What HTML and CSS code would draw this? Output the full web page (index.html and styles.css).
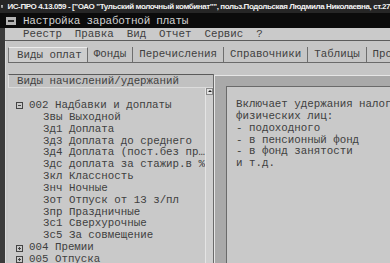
FILE: index.html
```html
<!DOCTYPE html>
<html lang="ru">
<head>
  <meta charset="UTF-8" />
  <title>ИС-ПРО | Настройка заработной платы</title>
  <link rel="stylesheet" href="styles.css">
</head>
<body>
  <div class="app">
    <div class="titlebar">
      <svg class="app-icon" width="8" height="9" viewBox="0 0 8 9">
        <rect x="0.5" y="0.5" width="7" height="8" fill="#9a9a9a" stroke="#e8e8e8" />
        <rect x="2" y="2" width="4" height="2" fill="#ffffff" />
        <rect x="2" y="5" width="4" height="2" fill="#5a5a5a" />
      </svg>
      <span class="app-title">ИС-ПРО 4.13.059 - ["ОАО "Тульский молочный комбинат"", польз.Подольская Людмила Николаевна, ст.27</span>
    </div>

    <div class="window">
      <div class="doc-title">
        <span class="sysbox"><span></span></span>
        <span>Настройка заработной платы</span>
      </div>

      <div class="menubar"><span class="menu-items">Реестр  Правка  Вид  Отчет  Сервис  ?</span></div>

      <div class="workspace">
        <div class="tabs">
          <div class="tab active">Виды оплат</div>
          <div class="tab">Фонды</div>
          <div class="tab">Перечисления</div>
          <div class="tab">Справочники</div>
          <div class="tab">Таблицы</div>
          <div class="tab">Проводки</div>
        </div>

        <div class="tab-body">
          <div class="list-panel">
            <div class="list-head">Виды начислений/удержаний</div>
            <div class="list-wrap">
              <ul class="tree">
                <li class="node">
                  <svg class="toggle" width="7" height="7" viewBox="0 0 7 7"><rect x="0.5" y="0.5" width="6" height="6" fill="none" stroke="#444" /><path d="M2 3.5h3" stroke="#444" /></svg>
                  002 Надбавки и доплаты
                </li>
                <li class="leaf">3вы Выходной</li>
                <li class="leaf">3д1 Доплата</li>
                <li class="leaf">3д3 Доплата до среднего</li>
                <li class="leaf">3д4 Доплата (пост.без пр…</li>
                <li class="leaf">3дс доплата за стажир.в %</li>
                <li class="leaf">3кл Классность</li>
                <li class="leaf">3нч Ночные</li>
                <li class="leaf">3от Отпуск от 13 з/пл</li>
                <li class="leaf">3пр Праздничные</li>
                <li class="leaf">3с1 Сверхурочные</li>
                <li class="leaf">3с5 За совмещение</li>
                <li class="node">
                  <svg class="toggle" width="7" height="7" viewBox="0 0 7 7"><rect x="0.5" y="0.5" width="6" height="6" fill="none" stroke="#444" /><path d="M2 3.5h3M3.5 2v3" stroke="#444" /></svg>
                  004 Премии
                </li>
                <li class="node">
                  <svg class="toggle" width="7" height="7" viewBox="0 0 7 7"><rect x="0.5" y="0.5" width="6" height="6" fill="none" stroke="#444" /><path d="M2 3.5h3M3.5 2v3" stroke="#444" /></svg>
                  005 Отпуска
                </li>
              </ul>
              <div class="scrollbar">
                <span class="scroll-up"></span>
              </div>
            </div>
          </div>

          <div class="splitter"></div>

          <div class="desc-frame">
            <div class="desc">
              <p>Включает удержания налогов с</p>
              <p>физических лиц:</p>
              <p>- подоходного</p>
              <p>- в пенсионный фонд</p>
              <p>- в фонд занятости</p>
              <p>и т.д.</p>
            </div>
          </div>
        </div>
      </div>
    </div>
  </div>
</body>
</html>
```

FILE: styles.css
```css
* {
  box-sizing: border-box;
}

body {
  margin: 0;
  width: 390px;
  height: 263px;
  overflow: hidden;
  background: #c6c6c6;
  font-family: 'Liberation Mono', 'DejaVu Sans Mono', monospace;
  font-size: 10.8px;
  color: #404040;
}

.app {
  display: flex;
  flex-direction: column;
  height: 263px;
}

.titlebar {
  height: 13px;
  display: flex;
  align-items: center;
  gap: 4px;
  padding-left: 1px;
  background: #262626;
  color: #f2f2f2;
  white-space: nowrap;
  overflow: hidden;
}

.app-title {
  font-family: 'Liberation Sans', Arial, sans-serif;
  font-size: 8px;
  font-weight: bold;
  letter-spacing: -0.4px;
}

.window {
  flex: 1;
  display: flex;
  flex-direction: column;
  border-left: 5px solid #3b3b3b;
  min-height: 0;
}

.doc-title {
  height: 15px;
  margin-left: -5px;
  display: flex;
  align-items: center;
  gap: 7px;
  padding-left: 6px;
  background: #0b0b0b;
  color: #d2d2d2;
  font-size: 11px;
  letter-spacing: -0.25px;
  white-space: nowrap;
}

.sysbox {
  width: 10px;
  height: 8px;
  background: #b4b4b4;
  display: flex;
  align-items: center;
  justify-content: center;
}

.sysbox span {
  width: 6px;
  height: 2px;
  background: #2a2a2a;
}

.menubar {
  height: 13px;
  line-height: 12px;
  padding-left: 18px;
  background: #cacaca;
  border-bottom: 1px solid #5c5c5c;
}

.menu-items {
  white-space: pre;
}

.workspace {
  flex: 1;
  min-height: 0;
  border-left: 1px solid #dadada;
  padding: 6px 0 0 2px;
  background: #c6c6c6;
}

.tabs {
  display: flex;
  height: 15px;
  white-space: nowrap;
}

.tab {
  padding: 0 6px;
  line-height: 14px;
  border-right: 1px solid #6e6e6e;
}

.tab.active {
  padding-left: 8px;
  padding-right: 5px;
  background: #cdcdcd;
  border-top: 1px solid #ececec;
  border-left: 1px solid #7a7a7a;
}

.tab-body {
  display: flex;
  height: 210px;
  border-top: 1px solid #6a6a6a;
  padding-top: 11px;
}

.list-panel {
  width: 212px;
  display: flex;
  flex-direction: column;
  border-right: 1px solid #6a6a6a;
  background: #c9c9c9;
}

.list-head {
  height: 14px;
  line-height: 13px;
  padding-left: 8px;
  background: #c1c1c1;
  border-top: 1px solid #5a5a5a;
  border-left: 1px solid #e0e0e0;
  border-bottom: 1px solid #dcdcdc;
  white-space: nowrap;
}

.list-wrap {
  flex: 1;
  display: flex;
  min-height: 0;
}

.tree {
  flex: 1;
  list-style: none;
  margin: 0;
  padding: 12px 0 0 8px;
  line-height: 11.85px;
  white-space: nowrap;
  overflow: hidden;
}

.node {
  display: flex;
  align-items: center;
  gap: 6px;
}

.leaf {
  padding-left: 27px;
}

.scrollbar {
  width: 8px;
  background: #cfcfcf;
  border-left: 1px solid #e4e4e4;
}

.scroll-up {
  display: block;
  width: 7px;
  height: 7px;
  background: #e2e2e2;
  border: 1px solid #8a8a8a;
  position: relative;
}

.scroll-up::after {
  content: "";
  position: absolute;
  left: 1px;
  top: 1px;
  border-left: 2px solid transparent;
  border-right: 2px solid transparent;
  border-bottom: 2px solid #222;
}

.splitter {
  width: 5px;
  background: #d2d2d2;
}

.desc-frame {
  flex: 1;
  margin-top: 1px;
  padding: 10px 0 0 11px;
  background: #a9a9a9;
  border-left: 1px solid #e6e6e6;
  border-top: 1px solid #e6e6e6;
}

.desc {
  height: 100%;
  padding: 12px 0 0 9px;
  background: #c9c9c9;
  border-left: 1px solid #6a6a6a;
  border-top: 1px solid #6a6a6a;
  line-height: 11.85px;
  white-space: nowrap;
  overflow: hidden;
}

.desc p {
  margin: 0;
}
```
